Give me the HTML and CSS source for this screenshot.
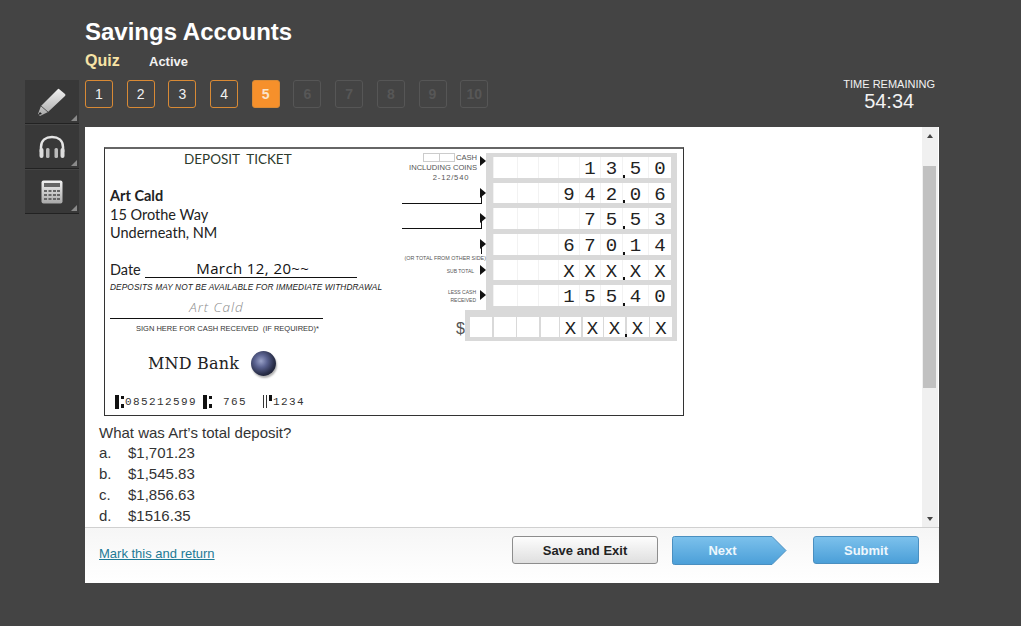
FILE: index.html
```html
<!DOCTYPE html>
<html lang="en">
<head>
    <meta charset="UTF-8">
    <meta name="viewport" content="width=device-width, initial-scale=1.0">
    <title>Savings Accounts</title>
    <link rel="stylesheet" href="styles.css">
</head>
<body>
    <header class="page-head">
        <h1>Savings Accounts</h1>
        <div class="subtitle">
            <span class="quiz">Quiz</span>
            <span class="active">Active</span>
        </div>
    </header>

    <div class="toolbar-row">
        <div class="tools">
            <div class="tool">
                <svg width="34" height="30" viewBox="0 0 34 30">
                    <defs>
                        <linearGradient id="metal" x1="0" y1="0" x2="0" y2="1">
                            <stop offset="0" stop-color="#f2f2f2"/>
                            <stop offset="1" stop-color="#a8a8a8"/>
                        </linearGradient>
                    </defs>
                    <path d="M24 2 L30 7 Q31 8 30 9 L13 25 L5 29 L3 27 L6 19 L23 2 Q23.5 1.6 24 2 Z" fill="url(#metal)"/>
                    <path d="M6 19 L13 25" stroke="#555" stroke-width="1" fill="none"/>
                    <path d="M5 25 L3 28 L7 27 Z" fill="#222"/>
                </svg>
            </div>
            <div class="tool">
                <svg width="30" height="26" viewBox="0 0 30 26">
                    <path d="M4 18 V13 C4 6 9 3 15 3 C21 3 26 6 26 13 V18" fill="none" stroke="#e4e4e4" stroke-width="2.5"/>
                    <rect x="2.5" y="14" width="4" height="10" rx="2" fill="#ddd"/>
                    <rect x="9" y="14" width="3.5" height="10" rx="1.5" fill="#bbb"/>
                    <rect x="17.5" y="14" width="3.5" height="10" rx="1.5" fill="#bbb"/>
                    <rect x="23.5" y="14" width="4" height="10" rx="2" fill="#ddd"/>
                </svg>
            </div>
            <div class="tool">
                <svg width="22" height="24" viewBox="0 0 22 24">
                    <rect x="0.5" y="0.5" width="21" height="23" rx="2" fill="url(#metal)"/>
                    <rect x="3" y="3" width="16" height="4" fill="#666"/>
                    <path d="M3 10h3v2H3zM7.5 10h3v2h-3zM12 10h3v2h-3zM16 10h3v2h-3zM3 14h3v2H3zM7.5 14h3v2h-3zM12 14h3v2h-3zM16 14h3v2h-3zM3 18h3v2H3zM7.5 18h3v2h-3zM12 18h3v2h-3zM16 18h3v2h-3z" fill="#666"/>
                </svg>
            </div>
        </div>

        <nav class="question-nav">
            <button class="q-btn">1</button>
            <button class="q-btn">2</button>
            <button class="q-btn">3</button>
            <button class="q-btn">4</button>
            <button class="q-btn current">5</button>
            <button class="q-btn locked">6</button>
            <button class="q-btn locked">7</button>
            <button class="q-btn locked">8</button>
            <button class="q-btn locked">9</button>
            <button class="q-btn locked">10</button>
        </nav>

        <div class="timer">
            <div class="timer-label">TIME REMAINING</div>
            <div class="timer-value">54:34</div>
        </div>
    </div>

    <main class="panel">
        <div class="question-area">
            <div class="question-body">
                <div class="ticket">
                    <div class="ticket-left">
                        <div class="ticket-title">DEPOSIT&nbsp; TICKET</div>
                        <div class="address">
                            <strong>Art Cald</strong>
                            <div>15 Orothe Way</div>
                            <div>Underneath, NM</div>
                        </div>
                        <div class="date-line">
                            <span>Date</span>
                            <span class="date-value">March 12, 20~~</span>
                        </div>
                        <div class="fine-print">DEPOSITS MAY NOT BE AVAILABLE FOR IMMEDIATE WITHDRAWAL</div>
                        <div class="signature">Art Cald</div>
                        <div class="sign-note">SIGN HERE FOR CASH RECEIVED&nbsp; (IF REQUIRED)*</div>
                        <div class="bank">
                            <span class="bank-name">MND Bank</span>
                            <span class="globe"></span>
                        </div>
                        <div class="micr">
                            <span class="micr-mark"></span><span class="micr-num">085212599</span>
                            <span class="micr-mark second"></span><span class="micr-num">765</span>
                            <span class="micr-bars"></span><span class="micr-num">1234</span>
                        </div>
                    </div>

                    <div class="ticket-right">
                        <div class="labels">
                            <div class="label-row cash">
                                <div class="cash-top"><span class="cash-box"></span>CASH</div>
                                <div>INCLUDING COINS</div>
                                <div class="routing">2-12/540</div>
                            </div>
                            <div class="label-row"><span class="blank"></span></div>
                            <div class="label-row"><span class="blank"></span></div>
                            <div class="label-row"><span class="blank no-line"></span><span class="other-side">(OR TOTAL FROM OTHER SIDE)</span></div>
                            <div class="label-row tiny">SUB TOTAL</div>
                            <div class="label-row tiny less">LESS CASH<br>RECEIVED</div>
                        </div>
                        <div class="amounts">
                            <div class="amount-row">
                                <span></span><span></span><span></span><span></span>
                                <span>1</span><span class="dec">3</span><span>5</span><span>0</span>
                            </div>
                            <div class="amount-row">
                                <span></span><span></span><span></span><span>9</span>
                                <span>4</span><span class="dec">2</span><span>0</span><span>6</span>
                            </div>
                            <div class="amount-row">
                                <span></span><span></span><span></span><span></span>
                                <span>7</span><span class="dec">5</span><span>5</span><span>3</span>
                            </div>
                            <div class="amount-row">
                                <span></span><span></span><span></span><span>6</span>
                                <span>7</span><span class="dec">0</span><span>1</span><span>4</span>
                            </div>
                            <div class="amount-row">
                                <span></span><span></span><span></span><span>X</span>
                                <span>X</span><span class="dec">X</span><span>X</span><span>X</span>
                            </div>
                            <div class="amount-row">
                                <span></span><span></span><span></span><span>1</span>
                                <span>5</span><span class="dec">5</span><span>4</span><span>0</span>
                            </div>
                        </div>
                        <div class="total-line">
                            <span class="dollar">$</span>
                            <div class="amount-row total">
                                <span></span><span></span><span></span><span></span><span>X</span>
                                <span>X</span><span class="dec">X</span><span>X</span><span>X</span>
                            </div>
                        </div>
                    </div>
                </div>

                <p class="question">What was Art’s total deposit?</p>
                <ol class="choices">
                    <li><span>a.</span>$1,701.23</li>
                    <li><span>b.</span>$1,545.83</li>
                    <li><span>c.</span>$1,856.63</li>
                    <li><span>d.</span>$1516.35</li>
                </ol>
            </div>
            <div class="scrollbar">
                <div class="arrow up"></div>
                <div class="track"><div class="thumb"></div></div>
                <div class="arrow down"></div>
            </div>
        </div>

        <footer class="panel-foot">
            <a class="mark-link" href="#">Mark this and return</a>
            <div class="foot-actions">
                <button class="btn save">Save and Exit</button>
                <button class="btn next">Next
                    <svg class="next-shape" width="115" height="29" viewBox="0 0 115 29">
                        <defs>
                            <linearGradient id="blue" x1="0" y1="0" x2="0" y2="1">
                                <stop offset="0" stop-color="#7cc1ec"/>
                                <stop offset="1" stop-color="#4b9fd8"/>
                            </linearGradient>
                        </defs>
                        <path d="M2.5 .5 H100 L114 14.5 L100 28.5 H2.5 Q.5 28.5 .5 26.5 V2.5 Q.5 .5 2.5 .5 Z" fill="url(#blue)" stroke="#4a8fc0"/>
                    </svg>
                </button>
                <button class="btn submit">Submit</button>
            </div>
        </footer>
    </main>
</body>
</html>
```

FILE: styles.css
```css
html, body {
    height: 100%;
}

body {
    margin: 0;
    height: 626px;
    overflow: hidden;
    background-color: #444444;
    font-family: "Liberation Sans", Arial, sans-serif;
    color: #333;
}

.page-head {
    padding: 17px 0 0 85px;
    height: 80px;
    box-sizing: border-box;
}

h1 {
    margin: 0;
    font-size: 24px;
    line-height: 29px;
    font-weight: bold;
    color: #fff;
}

.subtitle {
    display: flex;
    align-items: baseline;
    margin-top: 6px;
}

.quiz {
    width: 64px;
    font-size: 16px;
    font-weight: bold;
    color: #f7e3a6;
}

.active {
    font-size: 13px;
    font-weight: bold;
    color: #f2f2f2;
}

/* tools + question buttons + timer */
.toolbar-row {
    display: flex;
    height: 47px;
    padding-left: 25px;
}

.tools {
    width: 54px;
    margin-right: 6px;
    flex-shrink: 0;
    height: 134px;
    position: relative;
    z-index: 1;
}

.tool {
    position: relative;
    height: 43px;
    margin-bottom: 1px;
    background-color: #383838;
    border-bottom: 1px solid #222;
    box-sizing: content-box;
    display: flex;
    align-items: center;
    justify-content: center;
}

.tool::after {
    content: "";
    position: absolute;
    right: 2px;
    bottom: 2px;
    border-style: solid;
    border-width: 0 0 6px 6px;
    border-color: transparent transparent #8a8a8a transparent;
}

.question-nav {
    display: flex;
    gap: 13.7px;
    height: 28px;
}

.q-btn {
    width: 28px;
    height: 28px;
    padding: 0;
    border: 1px solid #d98a35;
    border-radius: 3px;
    background: transparent;
    color: #f2f2f2;
    font-family: "Liberation Sans", Arial, sans-serif;
    font-size: 14px;
}

.q-btn.current {
    background-color: #f6902b;
    font-weight: bold;
    color: #fbe4c8;
}

.q-btn.locked {
    border-color: #565656;
    color: #575757;
    font-weight: bold;
}

.timer {
    margin-left: auto;
    margin-right: 86px;
    text-align: center;
    color: #f2f2f2;
}

.timer-label {
    font-size: 11px;
    line-height: 10px;
    margin-top: -1px;
}

.timer-value {
    font-size: 20px;
    line-height: 24px;
}

/* main white panel */
.panel {
    margin: 0 82px 0 85px;
    width: 854px;
    height: 456px;
    background-color: #fff;
    display: flex;
    flex-direction: column;
}

.question-area {
    display: flex;
    height: 400px;
    overflow: hidden;
}

.question-body {
    flex: 1;
    padding: 20px 0 0 14px;
}

.scrollbar {
    width: 16px;
    margin-right: 1px;
    display: flex;
    flex-direction: column;
    background-color: #f0f0f0;
}

.arrow {
    height: 17px;
    display: flex;
    align-items: center;
    justify-content: center;
    flex-shrink: 0;
}

.arrow::before {
    content: "";
    border-left: 3.5px solid transparent;
    border-right: 3.5px solid transparent;
}

.arrow.up::before {
    border-bottom: 4px solid #444;
}

.arrow.down::before {
    border-top: 4px solid #444;
}

.track {
    flex: 1;
    padding-top: 22px;
}

.thumb {
    width: 13px;
    margin-left: 1px;
    height: 222px;
    background-color: #c1c1c1;
}

/* deposit ticket */
.ticket {
    width: 578px;
    height: 266px;
    margin-left: 5px;
    border: 1px solid #333;
    border-top: 2px solid #666;
    display: flex;
    background-color: #fff;
    color: #222;
}

.ticket-left {
    width: 295px;
    padding-left: 5px;
    box-sizing: border-box;
    flex-shrink: 0;
}

.ticket-title {
    margin-top: 2px;
    padding-left: 74px;
    font-family: "Lato", sans-serif;
    font-size: 13.5px;
    line-height: 17px;
    color: #2c3a2c;
}

.address {
    margin-top: 19px;
    font-family: "Lato", sans-serif;
    font-size: 14.5px;
    line-height: 18.5px;
}

.address strong {
    display: block;
}

.date-line {
    display: flex;
    align-items: flex-end;
    margin-top: 16px;
    font-family: "Lato", sans-serif;
    font-size: 14.5px;
    line-height: 17px;
}

.date-value {
    width: 212px;
    margin-left: 4px;
    padding-left: 4px;
    border-bottom: 1px solid #111;
    text-align: center;
    font-family: "Open Sans", sans-serif;
    font-size: 15px;
    line-height: 18px;
    letter-spacing: 0.4px;
    color: #111;
    box-sizing: border-box;
}

.fine-print {
    margin-top: 4px;
    font-size: 8.3px;
    line-height: 11px;
    font-style: italic;
    white-space: nowrap;
    letter-spacing: 0.1px;
}

.signature {
    margin-top: 5px;
    width: 213px;
    height: 20px;
    border-bottom: 1px solid #111;
    text-align: center;
    font-family: "Open Sans", sans-serif;
    font-size: 13.5px;
    line-height: 18px;
    font-style: italic;
    font-weight: 300;
    color: #8a8a8a;
    letter-spacing: 1px;
}

.sign-note {
    margin: 5px 0 0 26px;
    font-size: 7.5px;
    line-height: 10px;
    white-space: nowrap;
    color: #333;
}

.bank {
    display: flex;
    align-items: center;
    margin: 16px 0 0 38px;
}

.bank-name {
    font-family: "DejaVu Serif", serif;
    font-size: 16px;
    line-height: 28px;
    letter-spacing: 0.2px;
}

.globe {
    width: 25px;
    height: 25px;
    margin-left: 12px;
    border-radius: 50%;
    background: radial-gradient(circle at 40% 40%, #9aa2c8 0, #5a6290 30%, #2a2f4a 62%, #0c0c10 100%);
    box-shadow: 1px 2px 2px rgba(0, 0, 0, 0.3);
}

.micr {
    display: flex;
    align-items: center;
    margin: 16px 0 0 5px;
    height: 16px;
}

.micr-num {
    font-family: "Liberation Mono", monospace;
    font-size: 11px;
    letter-spacing: 1.4px;
    color: #333;
}

.micr-mark {
    width: 9px;
    height: 14px;
    margin-right: 1px;
    background:
        linear-gradient(#111, #111) 0 0 / 4px 100% no-repeat,
        linear-gradient(#111, #111) 6px 1px / 3px 3px no-repeat,
        linear-gradient(#111, #111) 6px 9px / 3px 4px no-repeat;
}

.micr-mark.second {
    margin-left: 6px;
    margin-right: 11px;
}

.micr-bars {
    width: 10px;
    height: 13px;
    margin-left: 16px;
    background:
        linear-gradient(#333, #333) 0 0 / 1px 100% no-repeat,
        linear-gradient(#333, #333) 3px 0 / 1px 100% no-repeat,
        linear-gradient(#111, #111) 6px 0 / 3px 6px no-repeat;
}

.ticket-right {
    flex: 1;
    position: relative;
    padding-top: 4px;
}

.labels {
    position: absolute;
    left: 0;
    top: 4px;
    width: 86px;
    font-size: 7.5px;
    color: #555;
}

.label-row {
    position: relative;
    height: 25.7px;
    text-align: right;
    padding-right: 7px;
    box-sizing: border-box;
}

.label-row::after {
    content: "";
    position: absolute;
    right: 0;
    top: 9px;
    border-left: 6px solid #111;
    border-top: 5.5px solid transparent;
    border-bottom: 5.5px solid transparent;
}

.label-row.tiny {
    font-size: 5px;
    line-height: 7px;
    padding: 12px 12px 0 0;
    white-space: nowrap;
}

.label-row.less {
    line-height: 8px;
    padding: 7px 10px 0 0;
}

.cash {
    font-size: 7.6px;
    line-height: 10px;
    text-align: center;
    padding: 0;
    white-space: nowrap;
}

.cash.label-row::after {
    top: 3px;
}

.cash-top {
    padding-left: 14px;
}

.cash-box {
    display: inline-block;
    width: 32px;
    height: 9px;
    margin-right: 1px;
    border: 1px solid #ccc;
    background: linear-gradient(#ccc, #ccc) 15px 0 / 1px 100% no-repeat;
    box-sizing: border-box;
    vertical-align: top;
}

.routing {
    padding-left: 16px;
    letter-spacing: 0.8px;
}

.blank {
    position: absolute;
    right: 4px;
    top: 14px;
    width: 79px;
    height: 10px;
    border-bottom: 1px solid #111;
    border-right: 1px solid #111;
}

.blank.no-line {
    border-bottom: 0;
}

.other-side {
    position: absolute;
    right: 0;
    top: 25px;
    font-size: 5.4px;
    line-height: 6px;
    white-space: nowrap;
}

.amounts {
    width: 191px;
    margin-left: 86px;
    background-color: #d9d9d9;
    padding: 4px 6px 0 7px;
    box-sizing: border-box;
    height: 157px;
    display: flex;
    flex-direction: column;
    gap: 5px;
}

.amount-row {
    display: grid;
    grid-template-columns: 24px 21px 20px 21px 21px 22px 26px 23px;
    height: 20.7px;
    background-color: #fff;
    font-family: "Liberation Mono", monospace;
    font-size: 19px;
    line-height: 25px;
    text-align: center;
    color: #222;
}

.amount-row span {
    height: 20.7px;
    border-left: 1px solid #f2f2f2;
    position: relative;
}

.amount-row .dec::after {
    content: "";
    position: absolute;
    right: -3px;
    bottom: 0;
    width: 3px;
    height: 3px;
    background-color: #111;
}

.total-line {
    display: flex;
    align-items: flex-start;
    height: 31px;
}

.dollar {
    width: 65px;
    margin-top: 10px;
    text-align: right;
    font-size: 16px;
    color: #555;
}

.amount-row.total {
    width: 212px;
    height: 31px;
    box-sizing: border-box;
    background-color: #d9d9d9;
    padding: 7px 5px 4px 5px;
    gap: 1.5px;
    grid-template-columns: 22px 22px 22px 18px 21px 20px 21px 22px 22px;
    line-height: 24px;
}

.total span {
    height: 20px;
    background-color: #fff;
    border: 0;
}

.question {
    margin: 8px 0 0;
    font-size: 15px;
    line-height: 18px;
    color: #333;
}

.choices {
    list-style: none;
    margin: 0;
    padding: 0;
    font-size: 15px;
    line-height: 21px;
    color: #333;
}

.choices span {
    display: inline-block;
    width: 29px;
}

/* footer */
.panel-foot {
    display: flex;
    align-items: center;
    justify-content: space-between;
    height: 56px;
    box-sizing: border-box;
    border-top: 1px solid #d0d0d0;
    padding: 0 20px 12px 14px;
    background: linear-gradient(#f6f6f6, #fff);
}

.mark-link {
    font-size: 13px;
    color: #1d7a96;
    margin-top: 7px;
}

.foot-actions {
    display: flex;
    align-items: center;
    margin-top: 1px;
}

.btn {
    height: 28px;
    padding: 0;
    font-family: "Liberation Sans", Arial, sans-serif;
    font-size: 13px;
    font-weight: bold;
    border-radius: 3px;
}

.save {
    width: 146px;
    margin-right: 14px;
    color: #222;
    border: 1px solid #8d8d8d;
    background: linear-gradient(#fdfdfd, #dfdfdf);
}

.next {
    position: relative;
    width: 115px;
    height: 29px;
    margin-right: 26px;
    border: none;
    background: transparent;
    color: #eef7fd;
    isolation: isolate;
    padding-right: 14px;
}

.next-shape {
    position: absolute;
    left: 0;
    top: 0;
    z-index: -1;
}

.submit {
    width: 106px;
    color: #eef7fd;
    border: 1px solid #4a8fc0;
    background: linear-gradient(#7cc1ec, #4b9fd8);
}
```
